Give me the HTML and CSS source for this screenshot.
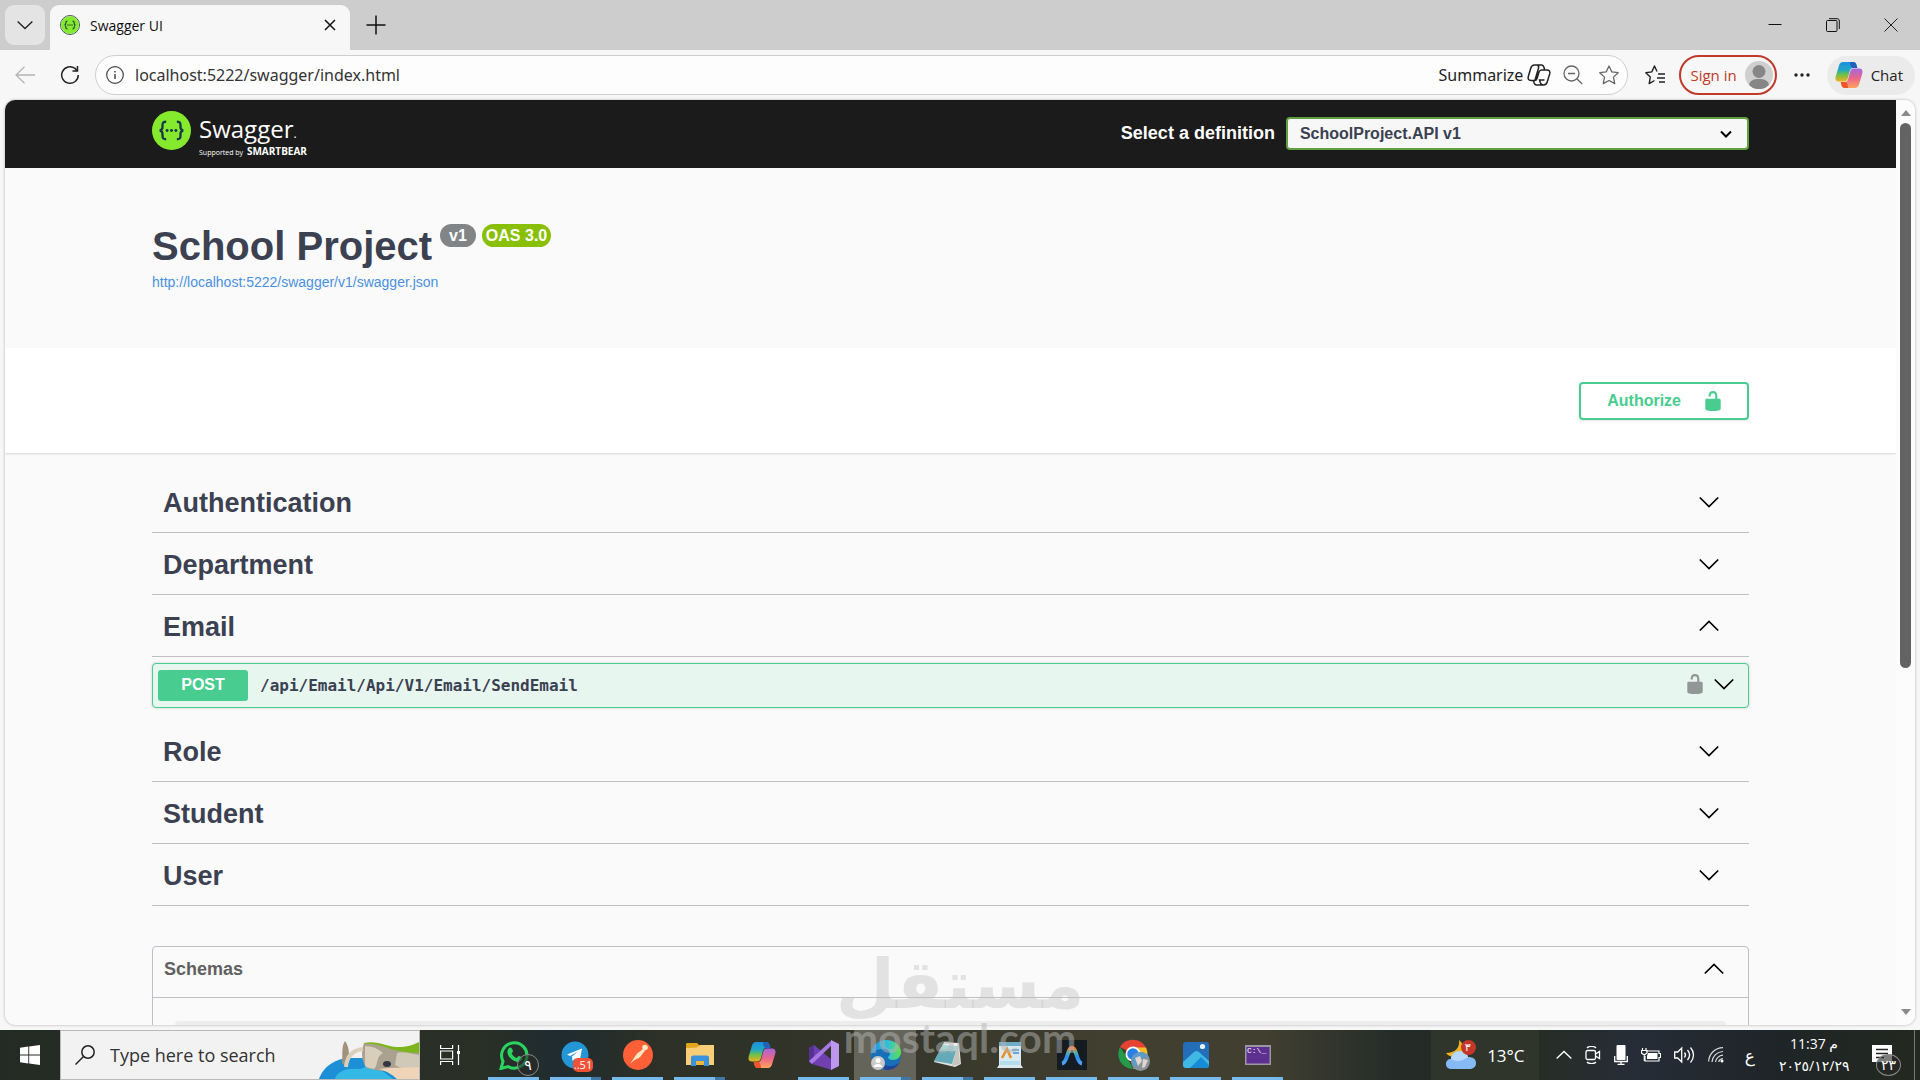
FILE: index.html
```html
<!DOCTYPE html>
<html lang="en">

<head>
  <meta charset="UTF-8">
  <meta name="viewport" content="width=device-width, initial-scale=1.0">
  <title>Swagger UI</title>
  <link rel="stylesheet" href="styles.css">
</head>

<body>
  <!-- shared icons -->
  <svg class="sprite" width="0" height="0" aria-hidden="true">
    <defs>
      <linearGradient id="cpA" x1="0" y1="0" x2="0" y2="1">
        <stop offset="0" stop-color="#1a8fe0" />
        <stop offset=".4" stop-color="#22a7c4" />
        <stop offset=".65" stop-color="#6fc04a" />
        <stop offset="1" stop-color="#f2b01e" />
      </linearGradient>
      <linearGradient id="cpB" x1="0" y1="0" x2="0" y2="1">
        <stop offset="0" stop-color="#a566e0" />
        <stop offset=".5" stop-color="#e8668a" />
        <stop offset="1" stop-color="#ffa45c" />
      </linearGradient>
      <linearGradient id="edA" x1="0" y1="0" x2="1" y2="0">
        <stop offset="0" stop-color="#1b8fe0" />
        <stop offset=".55" stop-color="#2fc0d8" />
        <stop offset="1" stop-color="#5fe04a" />
      </linearGradient>
      <linearGradient id="arc" x1="0" y1="0" x2="0" y2="1">
        <stop offset="0" stop-color="#ff7a2e" />
        <stop offset=".3" stop-color="#4fb0a8" />
        <stop offset=".6" stop-color="#2f8cf0" />
        <stop offset="1" stop-color="#4fa0ff" />
      </linearGradient>
    </defs>
    <symbol id="down" viewBox="0 0 20 20">
      <path d="M.8 5.500 10 14.500l9.200-9" fill="none" stroke="currentColor" stroke-width="1.7" />
    </symbol>
    <symbol id="up" viewBox="0 0 20 20">
      <path d="M.8 14.500 10 5.500l9.200 9" fill="none" stroke="currentColor" stroke-width="1.7" />
    </symbol>
    <symbol id="unlocked" viewBox="0 0 20 20">
      <path d="M15.800 8H14V5.600C14 2.703 12.665 1 10 1 7.334 1 6 2.703 6 5.600V6h2v-.801C8 3.754 8.797 3 10 3c1.203 0 2 .754 2 2.199V8H4c-.553 0-1 .646-1 1.199V17c0 .549.428 1.139.951 1.307l1.197.387C5.672 18.861 6.550 19 7.100 19h5.800c.549 0 1.428-.139 1.951-.307l1.196-.387c.524-.167.953-.757.953-1.306V9.199C17 8.646 16.352 8 15.800 8z" fill="currentColor" />
    </symbol>
    <symbol id="braces" viewBox="0 0 40 40">
      <circle cx="20" cy="20" r="20" fill="#85ea2d" />
      <g fill="none" stroke="#173647" stroke-width="2.4">
        <path d="M14.500 11c-3 0-3.700.8-3.700 3.300 0 3.200.2 5-2.800 5.700 3 .7 2.800 2.500 2.800 5.700 0 2.500.7 3.300 3.700 3.300" />
        <path d="M25.500 11c3 0 3.700.8 3.700 3.300 0 3.200-.2 5 2.800 5.700-3 .7-2.800 2.500-2.800 5.700 0 2.500-.7 3.300-3.700 3.300" />
      </g>
      <g fill="#173647">
        <circle cx="15.500" cy="20" r="1.5" />
        <circle cx="20" cy="20" r="1.5" />
        <circle cx="24.500" cy="20" r="1.5" />
      </g>
    </symbol>
    <symbol id="copilot" viewBox="0 0 28 28">
      <path d="M8 1h10c2 0 3 1.200 3.500 3l.8 3h-4c-2 0-3 1-3.500 3l-2 7.500c-.6 2-1.800 3-3.800 3H4c-3 0-4-2-3.300-5L4 4.500C4.700 2.200 6 1 8 1z" fill="url(#cpA)" />
      <path d="M15 1h3c2 0 3 1.200 3.500 3l.8 3h-4c-1.500 0-2.500-1-3-3z" fill="#2460b8" />
      <path d="M20 27H10c-2 0-3-1.200-3.500-3l-.8-3h4c2 0 3-1 3.500-3l2-7.500c.6-2 1.800-3 3.800-3h5c3 0 4 2 3.300 5L24 23.500c-.7 2.300-2 3.500-4 3.500z" fill="url(#cpB)" />
      <path d="M13 27h-3c-2 0-3-1.200-3.500-3l-.8-3h4c1.500 0 2.500 1 3 3z" fill="#ee5528" />
    </symbol>
  </svg>

  <div class="tabstrip">
    <button class="tab-search" aria-label="Search tabs"><svg width="16" height="16"><use href="#down" /></svg></button>
    <div class="tab">
      <svg class="favicon" width="20" height="20"><use href="#braces" /></svg>
      <span class="tab-title">Swagger UI</span>
      <button class="icon-btn tab-close" aria-label="Close tab">
        <svg width="12" height="12" viewBox="0 0 12 12"><path d="M1 1l10 10M11 1 1 11" stroke="#111" stroke-width="1.5" /></svg>
      </button>
    </div>
    <button class="icon-btn new-tab" aria-label="New tab">
      <svg width="20" height="20" viewBox="0 0 20 20"><path d="M10 .5v19M.5 10h19" stroke="#111" stroke-width="1.5" /></svg>
    </button>
    <div class="window-controls">
      <button class="icon-btn" aria-label="Minimize"><svg width="14" height="14" viewBox="0 0 14 14"><path d="M.5 6.500h13" stroke="#111" /></svg></button>
      <button class="icon-btn" aria-label="Restore"><svg width="14" height="14" viewBox="0 0 14 14" fill="none" stroke="#111"><rect x=".5" y="2.5" width="10.5" height="11" rx="1" /><path d="M3 .7h8c1.500 0 2.300.8 2.300 2.300v8" /></svg></button>
      <button class="icon-btn" aria-label="Close"><svg width="14" height="14" viewBox="0 0 14 14"><path d="M.5.5l13 13M13.500.5l-13 13" stroke="#222" /></svg></button>
    </div>
  </div>

  <div class="toolbar">
    <button class="icon-btn nav" aria-label="Back"><svg width="20" height="18" viewBox="0 0 20 18" fill="none" stroke="#b4b4b4" stroke-width="1.3"><path d="M20 9H1M9.500.8 1 9l8.500 8.200" /></svg></button>
    <button class="icon-btn nav" aria-label="Refresh"><svg width="20" height="20" viewBox="0 0 20 20" fill="none" stroke="#222" stroke-width="1.5"><path d="M18.300 10A8.300 8.300 0 1 1 15 3.400l2 2M17.500 1v5h-5" /></svg></button>
    <div class="address">
      <svg width="18" height="18" viewBox="0 0 18 18" fill="none" stroke="#444" stroke-width="1.2"><circle cx="9" cy="9" r="8.3" /><path d="M9 8v5M9 5v1.600" stroke-width="1.5" /></svg>
      <input class="url" type="text" value="localhost:5222/swagger/index.html" aria-label="Address">
      <button class="summarize">Summarize
        <svg width="24" height="22" viewBox="0 0 24 22" fill="none" stroke="#222" stroke-width="1.5"><path d="M7.500 1h7c1.500 0 2 .8 2.500 2.500l.7 2.500h-3c-1.500 0-2.300.8-2.700 2L10 14.500c-.4 1.300-1.200 2-2.500 2H4c-2.500 0-3.300-1.700-2.700-4L3.800 4C4.400 2 5.600 1 7.500 1zM16.500 21h-7C8 21 7.500 20.200 7 18.500L6.500 16.500M17.700 6H20c2.500 0 3.300 1.700 2.700 4L20.200 18c-.6 2-1.800 3-3.700 3-1.500 0-2.500-.5-3.200-2.500L12.500 16h5M10.500 1.200c1 .4 1.500 1.300 1 3L8 16" /></svg>
      </button>
      <button class="icon-btn" aria-label="Zoom out"><svg width="20" height="20" viewBox="0 0 20 20" fill="none" stroke="#666" stroke-width="1.3"><circle cx="8.5" cy="8.5" r="7.5" /><path d="M14 14l5.300 5M5 8.500h7" /></svg></button>
      <button class="icon-btn" aria-label="Add to favorites"><svg width="20" height="20" viewBox="0 0 20 20" fill="none" stroke="#666" stroke-width="1.3" stroke-linejoin="round"><path d="M10 1l2.800 5.900 6.400.8-4.700 4.400 1.200 6.500L10 15.500l-5.700 3.100 1.200-6.500L.8 7.700l6.400-.8z" /></svg></button>
    </div>
    <button class="icon-btn favorites" aria-label="Favorites"><svg width="20" height="20" viewBox="0 0 20 20" fill="none" stroke="#222" stroke-width="1.4" stroke-linejoin="round"><path d="M12 6.500 9.500 1 6.800 6.900.8 7.700l4.500 4.400-1.100 6.500L9.500 15.500M13 9h7M12 13h8M14 17h6" /></svg></button>
    <button class="sign-in">Sign in
      <svg width="28" height="28" viewBox="0 0 28 28"><circle cx="14" cy="14" r="14" fill="#cfcfcf" /><circle cx="14" cy="10.5" r="6.5" fill="#868686" /><path d="M4 24c1-5 5-6 10-6s9 1 10 6a14 14 0 0 1-20 0z" fill="#868686" /></svg>
    </button>
    <button class="icon-btn more" aria-label="Settings and more"><svg width="16" height="4" viewBox="0 0 16 4" fill="#222"><circle cx="2" cy="2" r="1.7" /><circle cx="8" cy="2" r="1.7" /><circle cx="14" cy="2" r="1.7" /></svg></button>
    <button class="chat"><svg width="28" height="28"><use href="#copilot" /></svg>Chat</button>
  </div>

  <div class="viewport">
    <div class="page">
      <header class="topbar">
        <div class="wrapper topbar-wrapper">
          <a class="logo" href="#">
            <svg width="39" height="39"><use href="#braces" /></svg>
            <span class="logo-text">
              <span class="logo-name">Swagger<small>.</small></span>
              <span class="logo-sub">Supported by <b>SMARTBEAR</b></span>
            </span>
          </a>
          <label class="definition-label" for="definition">Select a definition</label>
          <div class="definition">
            <select id="definition">
              <option>SchoolProject.API v1</option>
            </select>
            <svg class="definition-arrow" width="12" height="12" viewBox="0 0 12 12"><path d="M1 3.500l5 5 5-5" fill="none" stroke="#000" stroke-width="2" /></svg>
          </div>
        </div>
      </header>

      <section class="wrapper info">
        <h1 class="title">School Project <span class="badges"><span class="badge">v1</span><span class="badge oas">OAS 3.0</span></span></h1>
        <a class="link" href="#">http://localhost:5222/swagger/v1/swagger.json</a>
      </section>

      <section class="scheme-container">
        <div class="wrapper schemes">
          <button class="authorize">Authorize <svg width="22" height="22"><use href="#unlocked" /></svg></button>
        </div>
      </section>

      <main class="wrapper operations">
        <h3 class="tag">Authentication <button aria-label="Expand"><svg width="20" height="20"><use href="#down" /></svg></button></h3>
        <h3 class="tag">Department <button aria-label="Expand"><svg width="20" height="20"><use href="#down" /></svg></button></h3>
        <h3 class="tag">Email <button aria-label="Collapse"><svg width="20" height="20"><use href="#up" /></svg></button></h3>
        <div class="opblock">
          <span class="method">POST</span>
          <span class="path">/api/Email/Api/V1/Email/SendEmail</span>
          <button class="lock" aria-label="Authorization"><svg width="22" height="22"><use href="#unlocked" /></svg></button>
          <button aria-label="Expand"><svg width="20" height="20"><use href="#down" /></svg></button>
        </div>
        <h3 class="tag">Role <button aria-label="Expand"><svg width="20" height="20"><use href="#down" /></svg></button></h3>
        <h3 class="tag">Student <button aria-label="Expand"><svg width="20" height="20"><use href="#down" /></svg></button></h3>
        <h3 class="tag">User <button aria-label="Expand"><svg width="20" height="20"><use href="#down" /></svg></button></h3>

        <section class="models">
          <h4 class="models-title">Schemas <button aria-label="Collapse"><svg width="20" height="20"><use href="#up" /></svg></button></h4>
          <div class="model"></div>
        </section>
      </main>
    </div>
    <div class="scrollbar">
      <svg width="10" height="6" viewBox="0 0 10 6"><path d="M5 0l5 6H0z" fill="#8a8a8a" /></svg>
      <div class="track"><div class="thumb"></div></div>
      <svg width="10" height="6" viewBox="0 0 10 6"><path d="M5 6l5-6H0z" fill="#8a8a8a" /></svg>
    </div>
  </div>

  <footer class="taskbar">
    <button class="start" aria-label="Start"><svg width="20" height="20" viewBox="0 0 20 20" fill="#fff"><path d="M0 2.700 8.300 1.500v8H0zM9.200 1.400 20 0v9.500H9.200zM0 10.400h8.300v8.100L0 17.300zM9.200 10.400H20V20L9.200 18.600z" /></svg></button>
    <div class="search">
      <svg width="20" height="20" viewBox="0 0 20 20" fill="none" stroke="#222" stroke-width="1.5"><circle cx="13" cy="7" r="6.2" /><path d="M8.500 11.500.5 19.500" /></svg>
      <input type="text" placeholder="Type here to search" aria-label="Type here to search">
      <!-- beach scene in the search box -->
      <svg class="search-art" width="100" height="38" viewBox="0 0 100 38">
        <path d="M0 38C4 26 16 17 32 17h30l14 12 4 9z" fill="#1c8fd6" />
        <path d="M16 38c2-8 12-11 24-10 8-1 8-6 16-2 9 4 12 8 18 12z" fill="#35b8e6" />
        <path d="M45 2c14-3 26 5 34 4 9 0 15-2 21-5v14L44 8z" fill="#7db51c" />
        <path d="M45 3c11-1 20 3 30 6 9 2 17 3 25 3v20c-18 0-44-2-52-5-6-6-6-18-3-24z" fill="#aaa28f" />
        <path d="M46 5c8 0 13 3 18 7-7 3-5 13-9 16-5-1-8-2-9-3z" fill="#d8ceb9" />
        <path d="M78 12c6-2 14 1 22 2v12c-12 3-20 1-24-2z" fill="#d0c9b7" />
        <path d="M60 28c13-2 27-1 40-2v12H78c-6-5-10-8-18-10z" fill="#efd4b8" />
        <path d="M26 0c5 6 5 18 2 26l-5-4c1-8-1-16 3-22z" fill="#a1937b" />
        <path d="M27 26C28 15 34 9 44 8" fill="none" stroke="#dccfba" stroke-width="4" />
        <ellipse cx="68" cy="23" rx="4" ry="3" fill="#343641" />
      </svg>
    </div>
    <button class="taskview" aria-label="Task view"><svg width="20" height="20" viewBox="0 0 20 20" fill="none" stroke="#fff" stroke-width="1.2"><path d="M.6 0v3.500h12V0M.6 6h12v8H.6zM.6 20v-3.500h12V20M18.500 0v20" /><rect x="17" y="6" width="3" height="3" fill="#fff" stroke="none" /></svg></button>

    <nav class="apps">
      <button class="app" aria-label="WhatsApp">
        <svg width="30" height="30" viewBox="0 0 30 30"><path d="M2 28.500l2-7.200A12.700 12.700 0 1 1 9 26.500z" fill="none" stroke="#2bd35f" stroke-width="3" /><path d="M10 8c2-1.500 3 0 4 3 0 1-1 1.500-1.400 2.400 1.300 2.300 2.900 3.600 5 4.600 1-.5 1.500-2 2.400-2 3 1.200 4 1.600 3 3.500-1.200 2.500-4.200 3-7 1.800C11.500 19.500 5.500 13 10 8z" fill="#2bd35f" /></svg>
        <span class="count">٩</span>
      </button>
      <button class="app grouped" aria-label="Telegram">
        <svg width="30" height="30" viewBox="0 0 30 30"><circle cx="14" cy="15" r="13.5" fill="#2495d5" /><path d="M6 14.500 21 8.500l-2.500 13.500-4.500-3.500-2.500 2.500-.5-4.500 6-5-8 4.500z" fill="#fff" /></svg>
        <span class="unread">..51</span>
      </button>
      <button class="app" aria-label="Postman"><svg width="30" height="30" viewBox="0 0 30 30"><circle cx="15" cy="15" r="15" fill="#ff6038" /><path d="M7 24l6-9c2-3 5-4 7-6l2 2c-3 2-3 5-6 7-3 1-5 2-9 6z" fill="#ffe7c2" /><circle cx="22" cy="7.5" r="2.8" fill="#ffe7c2" /></svg></button>
      <button class="app grouped" aria-label="File Explorer"><svg width="28" height="24" viewBox="0 0 28 24"><path d="M0 1.500C0 .5.500 0 1.500 0H11l3 3v5H0z" fill="#e3a51a" /><path d="M0 5l11-.500L14 2h14v20H0z" fill="#f8cd77" /><path d="M5 23V15c0-1.500.5-2.500 2.500-2.500h13c2 0 2.500 1 2.500 2.500v8h-5v-5h-8v5z" fill="#3a91dc" /><path d="M10 18h8v4h-8z" fill="#e9b63a" /></svg></button>
      <button class="app closed" aria-label="Copilot"><svg width="28" height="28"><use href="#copilot" /></svg></button>
      <button class="app" aria-label="Visual Studio"><svg width="30" height="30" viewBox="0 0 30 30"><path d="M0 8l5-3 18 15v10L3 24l-3-2z" fill="#7040b0" /><path d="M0 8l5-3v20l-5-3z" fill="#543293" /><path d="M3 24 23 5v-5L0 21z" fill="#a878e4" /><path d="M22 0l8 4v22l-8 4z" fill="#bd97ef" /></svg></button>
      <button class="app active grouped" aria-label="Edge">
        <svg width="30" height="30" viewBox="0 0 30 30"><circle cx="15" cy="15" r="15" fill="#176fb8" /><path d="M0 16C0 6 7 0 15 0c9 0 15 6 15 12 0 5-4 8-8 8-3 0-5-1-5-3 1-1 2-2 2-4-1-3-4-5-8-4-6 0-10 3-11 7z" fill="url(#edA)" /><path d="M11 20c0 4 5 7 10 6 3 0 6-2 8-4-3 6-8 8-14 8-4-2-6-6-4-10z" fill="#214596" /><circle cx="7" cy="23" r="7" fill="#c9c9c9" /><circle cx="7" cy="20.5" r="2.5" fill="#fff" /><path d="M2.500 27c1-4 8-4 9 0z" fill="#fff" /></svg>
      </button>
      <button class="app grouped" aria-label="Notepad"><svg width="28" height="28" viewBox="0 0 28 28"><path d="M9 4l16-2 2 21-6 3L0 21z" fill="#dfe3df" /><path d="M9 3h15l-6 20L0 20z" fill="#64aab8" /><path d="M9 3h15l-2 7H5z" fill="#a6d4d7" /><path d="M10 1l14 1v3L9 4z" fill="#eee" /><path d="M24 3l2 20-8 2z" fill="#c5c5bd" /></svg></button>
      <button class="app" aria-label="WordPad"><svg width="26" height="28" viewBox="0 0 26 28"><path d="M2 1h22v23l2 3H0l2-3z" fill="#d9e9f0" /><path d="M2 1h22v4H2z" fill="#70abc7" /><path d="M5 17l5-9 4 9" fill="none" stroke="#f08a20" stroke-width="2.5" /><path d="M15 9h7M16 12h6" stroke="#468ed1" stroke-width="1.5" /><path d="M3 20h20v4H3z" fill="#b4dcea" /></svg></button>
      <button class="app" aria-label="Editor"><svg width="30" height="30" viewBox="0 0 30 30"><path fill="#141c22" d="M0 0h30v30H0z" /><path d="M5 23.500c6-1 5-15.500 10-15.500s4 14.500 10 15.500" fill="none" stroke="url(#arc)" stroke-width="4" /></svg></button>
      <button class="app" aria-label="Chrome">
        <svg width="32" height="32" viewBox="0 0 32 32"><path d="M2 8A15 15 0 0 1 28 8.500L15 15z" fill="#e64234" /><path d="M28 8.500A15 15 0 0 1 15 30l6-12-6-9.500z" fill="#f6bd2a" /><path d="M2 8l8 12 5 10A15 15 0 0 1 2 8z" fill="#249a4b" /><circle cx="15" cy="15" r="7.5" fill="#fff" /><circle cx="15" cy="15" r="5.8" fill="#2b80e6" /><circle cx="22.5" cy="22.5" r="9.5" fill="#8b9299" /><path d="M15 17c5-6 13-5 16 1l-9 2-4 9c-4-3-5-8-3-12z" fill="#5d9cc8" /><path d="M17 19l5-2 2 5-4 5zM25 20l5 1-3 7-3 1z" fill="#ded7cf" /></svg>
      </button>
      <button class="app" aria-label="Photos"><svg width="26" height="26" viewBox="0 0 26 26"><rect width="26" height="26" rx="3" fill="#246db8" /><path d="M0 20 11 10c2-1.500 3-1.500 5 0l10 9v4c0 2-1 3-3 3H3c-2 0-3-1-3-3z" fill="#3fb9e4" /><path d="M7 26l11-11 8 8c0 2-1 3-3 3z" fill="#188bd6" /><circle cx="19.5" cy="4.5" r="2.6" fill="#e9f3fa" /></svg></button>
      <button class="app" aria-label="Developer Command Prompt">
        <svg width="26" height="20" viewBox="0 0 26 20"><path fill="#9a96a2" d="M0 0h26v20H0z" /><path fill="#5d2f91" d="M1.500 2h23v16.500h-23z" /></svg>
        <span class="prompt">C:\_</span>
      </button>
    </nav>

    <button class="weather">
      <svg width="32" height="30" viewBox="0 0 32 30"><path d="M14 0c1 8-4 13-13 13 4 5 10 5 16 0 2-5 1-10-3-13z" fill="#f0b21f" /><path d="M7 29c-4 0-6-2-6-5s2-5 5-5c0-5 4-8 9-8 4 0 7 2 8 6 5 0 8 2 8 6s-3 6-7 6z" fill="#86baf5" /><path d="M6 19c0-5 4-8 9-8 4 0 7 2 8 6-6 5-12 5-17 2z" fill="#b5d8fb" /><circle cx="23.5" cy="7.5" r="7.5" fill="#c5372a" /></svg>
      <span class="weather-badge">٣</span>
      13°C
    </button>
    <div class="tray">
      <button aria-label="Show hidden icons"><svg width="16" height="16"><use href="#up" /></svg></button>
      <button aria-label="Meet now"><svg width="16" height="18" viewBox="0 0 16 18" fill="none" stroke="#fff" stroke-width="1.3"><rect x="1" y="4.5" width="9.5" height="9" rx="1.5" /><path d="M10.500 8 14.500 5.500v7L10.500 10M2 2C4-.2 9-.2 11 2M2 16c2 2.200 7 2.200 9 0" /></svg></button>
      <button aria-label="Microphone"><svg width="14" height="20" viewBox="0 0 14 20" fill="none" stroke="#fff" stroke-width="1.3"><rect x="2.5" y="0" width="9" height="15" rx="1" fill="#fff" stroke="none" /><path d="M.7 11v5.500h12.600V11M7 16v3.500M3.500 19.300h7" /></svg></button>
      <button aria-label="Battery"><svg width="20" height="14" viewBox="0 0 20 14" fill="none" stroke="#fff" stroke-width="1.2"><path d="M5 3h13v2.500h1.500v4H18V13H4V8" /><path d="M7 5h9.500v6H6V8z" fill="#fff" stroke="none" /><path d="M1.500 0v2M5 0v2M.5 2.500H6V5L3.300 7 .5 5zM3.300 7v6" /></svg></button>
      <button aria-label="Volume"><svg width="21" height="18" viewBox="0 0 21 18" fill="none" stroke="#fff" stroke-width="1.3"><path d="M.7 6h3l4-4v14l-4-4h-3zM10.500 6.500c1.200 1.500 1.200 3.500 0 5M13.500 4c2.500 3 2.500 7 0 10M16.500 1.500c4 4.500 4 10.500 0 15" /></svg></button>
      <button aria-label="Network"><svg width="16" height="16" viewBox="0 0 16 16" fill="none" stroke="#ddd" stroke-width="1.2"><path d="M.6 14.500C1 6.500 7 1 15 .7M4 15C4.500 9 9 4.800 15 4.500M7.500 15c.3-3.700 3.500-6.500 7.500-6.800M10.800 15c.2-1.800 2-3.200 4.200-3.400" /><circle cx="14" cy="14" r="1.5" fill="#fff" stroke="none" /></svg></button>
      <button class="language">ع</button>
    </div>
    <div class="clock"><span>11:37 م</span><span>٢٠٢٥/١٢/٢٩</span></div>
    <button class="notifications" aria-label="Notifications">
      <svg width="20" height="20" viewBox="0 0 20 20"><path d="M0 0h20v17H0z" fill="#fff" /><path d="M4 4.500h12M4 8.500h12M4 12.500h8" stroke="#222" stroke-width="1.4" /></svg>
      <span class="count">٢٣</span>
    </button>
  </footer>

  <div class="watermark" aria-hidden="true">
    <span class="mark-ar">مستقل</span>
    <span class="mark-en">mostaql.com</span>
  </div>
</body>

</html>
```

FILE: styles.css
```css
* {
  box-sizing: border-box;
}

body {
  margin: 0;
  height: 100vh;
  display: flex;
  flex-direction: column;
  overflow: hidden;
  background: #f7f7f7;
  font-family: "Open Sans", "DejaVu Sans", sans-serif;
  color: #222;
}

button {
  display: flex;
  align-items: center;
  justify-content: center;
  padding: 0;
  border: none;
  background: none;
  color: inherit;
  font: inherit;
  cursor: pointer;
}

svg {
  display: block;
  flex-shrink: 0;
}

.sprite {
  position: absolute;
}

/* browser tabs */
.tabstrip {
  display: flex;
  align-items: center;
  flex-shrink: 0;
  height: 50px;
  padding-left: 5px;
  background: #cdcdcd;
}

.tab-search {
  width: 40px;
  height: 40px;
  border-radius: 9px;
  background: #e4e4e4;
}

.tab {
  display: flex;
  align-items: center;
  align-self: flex-end;
  width: 300px;
  height: 45px;
  margin-left: 5px;
  padding: 0 14px 5px 10px;
  border-radius: 9px 9px 0 0;
  background: #f7f7f7;
}

.favicon {
  border: 1px solid #3b5a4a;
  border-radius: 50%;
}

.tab-title {
  flex: 1;
  margin-left: 10px;
  font-size: 14px;
  color: #111;
}

.new-tab {
  margin-left: 16px;
}

.window-controls {
  display: flex;
  margin-left: auto;
}

.window-controls button {
  width: 58px;
  height: 50px;
}

/* address row */
.toolbar {
  display: flex;
  align-items: center;
  flex-shrink: 0;
  height: 50px;
  padding: 0 5px 0 15px;
}

.nav {
  width: 20px;
  margin-right: 25px;
}

.nav + .nav {
  margin-right: 15px;
}

.address {
  display: flex;
  align-items: center;
  flex: 1;
  height: 40px;
  padding: 0 8px 0 10px;
  border: 1px solid #cfcfcf;
  border-radius: 20px;
  background: #fdfdfd;
}

.address .icon-btn {
  margin-left: 12px;
}

.address .icon-btn + .icon-btn {
  margin-left: 16px;
}

.url {
  flex: 1;
  min-width: 0;
  padding: 0 0 1px 11px;
  border: none;
  background: none;
  font-family: "Noto Sans", sans-serif;
  font-size: 16px;
  color: #333;
}

.summarize {
  gap: 4px;
  font-family: "Noto Sans", sans-serif;
  font-size: 16px;
}

.favorites {
  margin-left: 17px;
}

.sign-in {
  gap: 8px;
  height: 40px;
  margin-left: 14px;
  padding: 0 2px 0 9px;
  border: 2px solid #bf3a28;
  border-radius: 20px;
  font-size: 15px;
  color: #bf3a28;
}

.more {
  margin: 0 17px;
}

.chat {
  gap: 8px;
  height: 39px;
  padding: 0 12px 0 8px;
  border-radius: 20px;
  background: #ebebeb;
  font-size: 15px;
}

/* page area */
.viewport {
  display: flex;
  flex: 1;
  min-height: 0;
  margin: 0 5px 5px;
  overflow: hidden;
  border-radius: 10px;
  background: #fafafa;
  box-shadow: 0 0 3px rgba(0, 0, 0, .3);
}

.page {
  flex: 1;
  min-width: 0;
  overflow: hidden;
  font-family: "Liberation Sans", Arial, sans-serif;
  color: #3b4151;
}

.wrapper {
  width: 100%;
  max-width: 1641px;
  margin: 0 auto;
  padding: 0 22px;
}

.topbar {
  background: #1b1b1b;
}

.topbar-wrapper {
  display: flex;
  align-items: center;
  height: 68px;
  padding-bottom: 2px;
}

.logo {
  display: flex;
  align-items: flex-start;
  align-self: flex-start;
  flex: 1;
  gap: 8px;
  padding-top: 11px;
  color: #fff;
  text-decoration: none;
  font-family: "Open Sans", sans-serif;
}

.logo-text {
  display: flex;
  flex-direction: column;
}

.logo-name {
  padding-top: 4px;
  font-size: 24px;
  line-height: 27px;
}

.logo-name small {
  font-size: 12px;
  line-height: 12px;
}

.logo-sub {
  font-size: 7px;
  line-height: 18px;
}

.logo-sub b {
  margin-left: 2px;
  font-size: 10px;
}

.definition-label {
  margin-right: 11px;
  font-size: 18px;
  font-weight: bold;
  color: #fff;
}

.definition {
  position: relative;
  width: 29%;
}

.definition select {
  display: block;
  width: 100%;
  height: 33px;
  padding: 0 12px;
  border: 2px solid #62a03f;
  border-radius: 4px;
  appearance: none;
  background: #f7f7f7;
  font-family: inherit;
  font-size: 16px;
  font-weight: bold;
  color: #3b4151;
}

.definition-arrow {
  position: absolute;
  top: 11px;
  right: 17px;
}

.info {
  padding-top: 56px;
  padding-bottom: 55px;
}

.title {
  display: flex;
  align-items: flex-start;
  gap: 8px;
  margin: 0 0 2px;
  font-size: 40px;
  line-height: 45px;
}

.badges {
  display: flex;
  gap: 6px;
}

.badge {
  padding: 0 9px;
  border-radius: 12px;
  background: #828588;
  font-size: 16px;
  line-height: 23px;
  color: #fff;
}

.badge.oas {
  padding: 0 4px;
  background: #89bf04;
}

.link {
  display: block;
  font-size: 14px;
  line-height: 22px;
  color: #4990e2;
  text-decoration: none;
}

.scheme-container {
  padding: 34px 0 33px;
  background: #fff;
  box-shadow: 0 1px 2px rgba(0, 0, 0, .15);
}

.schemes {
  display: flex;
  justify-content: flex-end;
}

.authorize {
  gap: 21px;
  height: 38px;
  padding: 0 23px 0 26px;
  border: 2px solid #49cc90;
  border-radius: 4px;
  box-shadow: 0 1px 2px rgba(0, 0, 0, .1);
  font-size: 16px;
  font-weight: bold;
  color: #49cc90;
}

.operations {
  padding-top: 23px;
}

.tag {
  display: flex;
  align-items: center;
  justify-content: space-between;
  height: 57px;
  margin: 0 0 5px;
  padding: 0 30px 1px 11px;
  border-bottom: 1px solid #bfc0c6;
  font-size: 27px;
}

.tag button,
.opblock button,
.models-title button {
  padding-bottom: 4px;
  color: #000;
}

.opblock {
  display: flex;
  align-items: center;
  height: 45px;
  margin: 6px 0 17px;
  padding: 0 14px 0 5px;
  border: 1px solid #49cc90;
  border-radius: 4px;
  background: #e8f6f0;
  box-shadow: 0 0 3px rgba(0, 0, 0, .19);
}

.method {
  width: 90px;
  padding-bottom: 2px;
  border-radius: 3px;
  background: #49cc90;
  font-size: 16px;
  font-weight: bold;
  line-height: 29px;
  text-align: center;
  color: #fff;
}

.path {
  flex: 1;
  margin-left: 12px;
  font-family: "DejaVu Sans Mono", monospace;
  font-size: 16px;
  font-weight: bold;
}

.opblock .lock {
  margin-right: 8px;
  color: #939696;
}

.models {
  margin-top: 40px;
  border: 1px solid #bfc0c6;
  border-radius: 4px;
}

.models-title {
  display: flex;
  align-items: center;
  justify-content: space-between;
  height: 51px;
  margin: 0;
  padding: 0 24px 6px 11px;
  border-bottom: 1px solid #bfc0c6;
  font-size: 18px;
  color: #606060;
}

.models-title button {
  padding-bottom: 0;
}

.model {
  height: 45px;
  margin: 23px 22px;
  border-radius: 4px;
  background: #ededed;
}

.scrollbar {
  display: flex;
  flex-direction: column;
  align-items: center;
  justify-content: space-between;
  width: 19px;
  padding: 10px 0;
  background: #fcfcfc;
}

.track {
  flex: 1;
  width: 11px;
  margin: 7px 0;
}

.thumb {
  height: 62%;
  border-radius: 6px;
  background: #636363;
}

/* desktop taskbar */
.taskbar {
  display: flex;
  flex-shrink: 0;
  height: 50px;
  background: linear-gradient(90deg, #242b24 0, #2a3026 25%, #1f2c30 29%, #2c3026 34%, #37372b 48%, #403f30 58%, #403f30 66%, #242b28 73%, #272d24 80%, #262d38 85%, #1f2528 92%, #232820 100%);
  color: #fff;
}

.start {
  width: 60px;
}

.search {
  position: relative;
  display: flex;
  align-items: center;
  width: 360px;
  padding-left: 14px;
  border: 1px solid #b9b9b9;
  background: #f2f2f2;
}

.search input {
  width: 220px;
  margin-left: 15px;
  padding: 0;
  border: none;
  background: none;
  font-family: inherit;
  font-size: 18px;
}

.search input::placeholder {
  color: #333;
}

.search-art {
  position: absolute;
  right: 0;
  bottom: 0;
}

.taskview {
  width: 62px;
  padding-right: 2px;
}

.apps {
  display: flex;
}

.app {
  position: relative;
  width: 62px;
  border: solid transparent;
  border-width: 0 5px 0 6px;
}

/* running indicator under each app */
.app::after {
  content: "";
  position: absolute;
  left: 0;
  right: 0;
  bottom: 0;
  height: 3px;
  background: #76b9ed;
}

.app.grouped::after {
  background: linear-gradient(90deg, #76b9ed 80%, #4277a4 80%);
}

.app.closed::after {
  display: none;
}

.app.active {
  background: #64645a;
}

.count {
  position: absolute;
  right: 0;
  bottom: 4px;
  width: 22px;
  height: 22px;
  border: 1px solid #8a8a8a;
  border-radius: 50%;
  background: rgba(40, 40, 40, .6);
  font-size: 14px;
  line-height: 20px;
  text-align: center;
}

.unread {
  position: absolute;
  right: 8px;
  bottom: 8px;
  width: 20px;
  border-radius: 5px;
  background: #ee5136;
  font-size: 11px;
  line-height: 14px;
  text-align: center;
}

.prompt {
  position: absolute;
  top: 16px;
  left: 15px;
  font-family: "Liberation Mono", monospace;
  font-size: 8px;
  line-height: 10px;
}

.weather {
  position: relative;
  gap: 10px;
  width: 108px;
  margin-left: auto;
  background: #30352b;
  font-size: 17px;
}

.weather-badge {
  position: absolute;
  top: 10px;
  left: 34px;
  font-size: 11px;
  line-height: 14px;
}

.tray {
  display: flex;
  align-items: center;
  gap: 13px;
  padding: 0 24px 0 17px;
}

.language {
  margin-left: 8px;
  font-size: 17px;
}

.clock {
  display: flex;
  flex-direction: column;
  justify-content: center;
  width: 70px;
  font-size: 14px;
  line-height: 22px;
  text-align: center;
  white-space: nowrap;
}

.notifications {
  position: relative;
  width: 66px;
  margin-right: 5px;
  border-right: 1px solid #777;
}

.notifications .count {
  right: 13px;
  width: 25px;
}

.watermark {
  position: absolute;
  left: 0;
  right: 0;
  bottom: 22px;
  display: flex;
  flex-direction: column;
  align-items: center;
  pointer-events: none;
  font-weight: bold;
  color: rgba(180, 180, 180, .5);
}

.mark-ar {
  font-family: "DejaVu Sans", sans-serif;
  font-size: 68px;
  line-height: 66px;
  color: rgba(190, 190, 190, .4);
}

.mark-en {
  font-family: Lato, sans-serif;
  font-size: 41px;
  line-height: 40px;
}
```
